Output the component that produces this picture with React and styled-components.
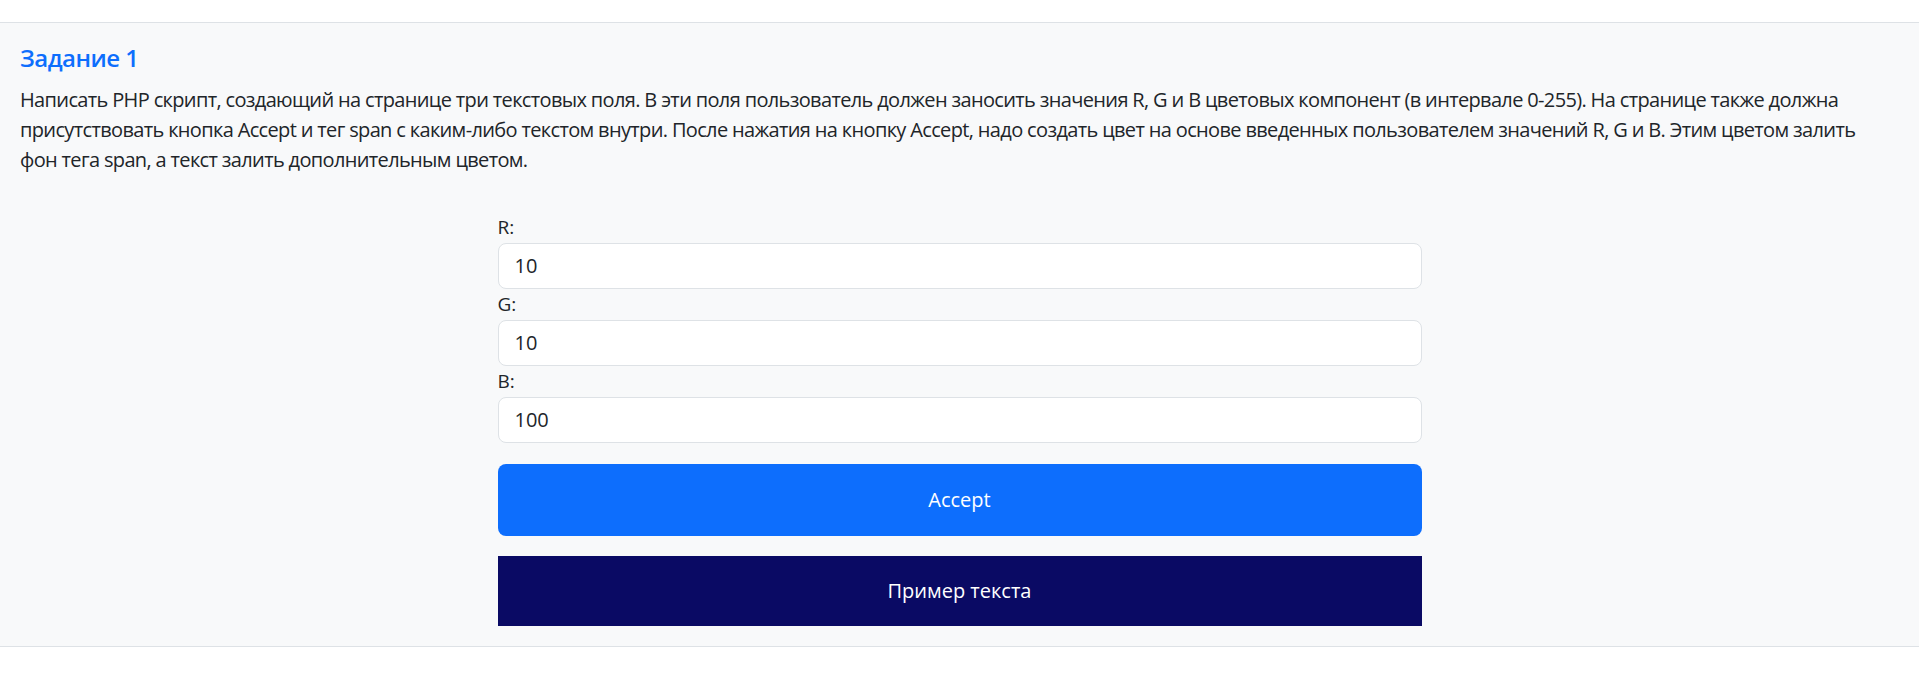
import styled, { createGlobalStyle } from "styled-components";
import { useState } from "react";

const GlobalStyle = createGlobalStyle`
  body {
    margin: 0;
    background-color: #fff;
    font-family: "Open Sans", "Noto Sans", sans-serif;
    color: #212529;
  }
`;

export default function App() {
  const [r, setR] = useState("10");
  const [g, setG] = useState("10");
  const [b, setB] = useState("100");
  const [color, setColor] = useState({ r: 10, g: 10, b: 100 });

  const acceptHandler = (e) => {
    e.preventDefault();
    setColor({ r: Number(r) || 0, g: Number(g) || 0, b: Number(b) || 0 });
  };

  return (
    <>
      <GlobalStyle />
      <Page>
        <Section>
          <Title>Задание 1</Title>
          <Text>
            Написать PHP скрипт, создающий на странице три текстовых поля. В эти поля
            пользователь должен заносить значения R, G и B цветовых компонент (в интервале
            0-255). На странице также должна присутствовать кнопка Accept и тег span с
            каким-либо текстом внутри. После нажатия на кнопку Accept, надо создать цвет на
            основе введенных пользователем значений R, G и B. Этим цветом залить фон тега
            span, а текст залить дополнительным цветом.
          </Text>
          <Form onSubmit={acceptHandler}>
            <Label htmlFor="r">R:</Label>
            <Input id="r" value={r} onChange={(e) => setR(e.target.value)} />
            <Label htmlFor="g">G:</Label>
            <Input id="g" value={g} onChange={(e) => setG(e.target.value)} />
            <Label htmlFor="b">B:</Label>
            <Input id="b" value={b} onChange={(e) => setB(e.target.value)} />
            <AcceptButton type="submit">Accept</AcceptButton>
            <Swatch
              style={{ backgroundColor: `rgb(${color.r}, ${color.g}, ${color.b})` }}
            >
              Пример текста
            </Swatch>
          </Form>
        </Section>
      </Page>
    </>
  );
}

const Page = styled.div`
  padding-top: 22px;
`;

const Section = styled.section`
  background-color: #f8f9fa;
  border-top: 1px solid #dee2e6;
  border-bottom: 1px solid #dee2e6;
  padding: 21px 20px 20px 20px;
`;

const Title = styled.h4`
  margin: 0 0 12px 0;
  font-size: 24px;
  font-weight: 600;
  line-height: 1.2;
  color: #0d6efd;
  letter-spacing: -0.5px;
`;

const Text = styled.p`
  max-width: 1862px;
  margin: 0;
  font-size: 20px;
  line-height: 30px;
  letter-spacing: -0.65px;
`;

const Form = styled.form`
  display: flex;
  flex-direction: column;
  width: 924px;
  margin: 37px auto 0 auto;
`;

const Label = styled.label`
  font-size: 19px;
  line-height: 31px;
`;

const Input = styled.input`
  box-sizing: border-box;
  height: 46px;
  padding: 0 16px;
  font-family: inherit;
  font-size: 20px;
  color: #212529;
  background-color: #fff;
  border: 1px solid #dee2e6;
  border-radius: 8px;
  outline: none;
`;

const AcceptButton = styled.button`
  margin-top: 21px;
  height: 72px;
  font-family: inherit;
  font-size: 20px;
  color: #fff;
  background-color: #0d6efd;
  border: none;
  border-radius: 8px;
  cursor: pointer;
  &:hover {
    background-color: #0b5ed7;
  }
`;

const Swatch = styled.span`
  display: flex;
  align-items: center;
  justify-content: center;
  margin-top: 20px;
  height: 70px;
  font-size: 20px;
  color: #fff;
`;
